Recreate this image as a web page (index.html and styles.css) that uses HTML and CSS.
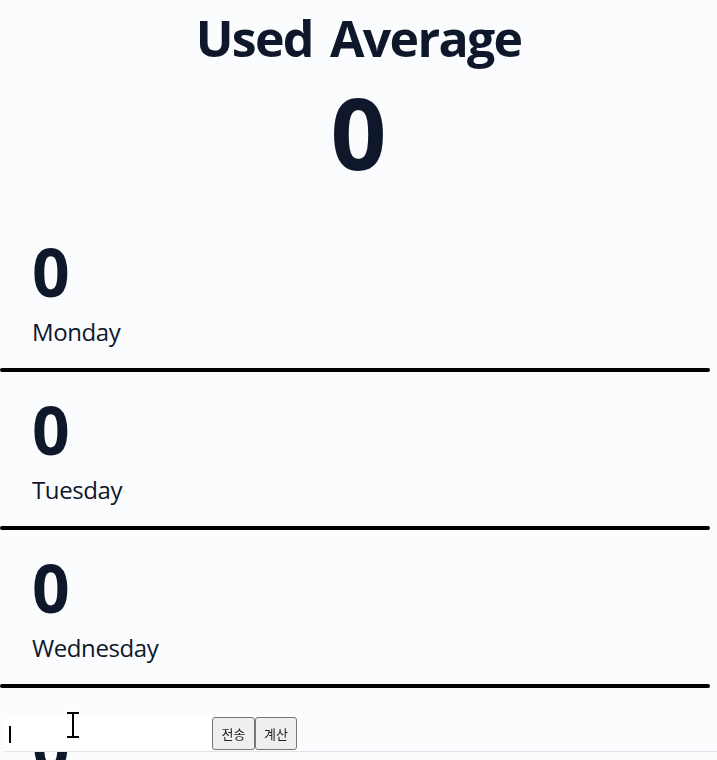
FILE: index.html
```html
<!DOCTYPE html>
<html lang="ko">
<head>
<meta charset="utf-8">
<title>Used Average</title>
<link rel="stylesheet" href="styles.css">
</head>
<body>
<main class="page">
  <header class="summary">
    <h1 class="summary-title">Used Average</h1>
    <div class="summary-value">0</div>
  </header>
  <ul class="days">
    <li class="day"><div class="day-body"><div class="day-count">0</div><div class="day-name">Monday</div></div></li>
    <li class="day"><div class="day-body"><div class="day-count">0</div><div class="day-name">Tuesday</div></div></li>
    <li class="day"><div class="day-body"><div class="day-count">0</div><div class="day-name">Wednesday</div></div></li>
    <li class="day"><div class="day-body"><div class="day-count">0</div><div class="day-name">Thursday</div></div></li>
    <li class="day"><div class="day-body"><div class="day-count">0</div><div class="day-name">Friday</div></div></li>
    <li class="day"><div class="day-body"><div class="day-count">0</div><div class="day-name">Saturday</div></div></li>
    <li class="day"><div class="day-body"><div class="day-count">0</div><div class="day-name">Sunday</div></div></li>
  </ul>
</main>
<form class="entry" onsubmit="return false">
  <div class="entry-field">
    <input class="entry-input" type="text" aria-label="사용량">
    <span class="entry-caret"></span>
  </div>
  <button class="entry-btn" type="button">전송</button>
  <button class="entry-btn" type="button">계산</button>
</form>
<svg class="pointer" width="16" height="28" viewBox="0 0 16 28" aria-hidden="true">
  <path d="M2 2h12M8 2v24M2 26h12" stroke="#fff" stroke-width="4" fill="none" stroke-linecap="square"/>
  <path d="M2 2h12M8 2v24M2 26h12" stroke="#000" stroke-width="2" fill="none"/>
</svg>
</body>
</html>
```
FILE: styles.css
```css
* { box-sizing: border-box; }

html, body {
  margin: 0;
  padding: 0;
  background: #fbfcfe;
}

body {
  font-family: "Open Sans", "Noto Sans", "Noto Sans CJK KR", sans-serif;
  color: #0f172a;
}

.page {
  padding-top: 8px;
  padding-bottom: 60px;
}

.summary {
  text-align: center;
}

.summary-title {
  margin: 0;
  font-size: 50px;
  line-height: 60px;
  font-weight: 700;
  letter-spacing: -1.7px;
  word-spacing: 6px;
}

.summary-value {
  margin-top: 14px;
  font-size: 98px;
  line-height: 100px;
  font-weight: 700;
}

.days {
  list-style: none;
  margin: 32px 0 0;
  padding: 0;
}

.day::after {
  content: "";
  display: block;
  height: 4px;
  margin-right: 7px;
  border-radius: 2px;
  background: #000;
}

.day-body {
  padding: 22px 32px 20px;
}

.day-count {
  font-size: 66px;
  line-height: 70px;
  font-weight: 700;
}

.day-name {
  margin-top: 10px;
  font-size: 24px;
  line-height: 32px;
  letter-spacing: -0.4px;
}

.entry {
  position: fixed;
  left: 5px;
  right: 0;
  bottom: 8px;
  display: flex;
  align-items: flex-start;
  height: 35px;
  border-bottom: 1px solid #e2e4e8;
}

.entry-field {
  position: relative;
  width: 207px;
  height: 34px;
  background: #fff;
}

.entry-input {
  width: 100%;
  height: 100%;
  border: 0;
  padding: 0 4px;
  background: transparent;
  outline: none;
  font: 13px "Noto Sans CJK KR", sans-serif;
}

.entry-caret {
  position: absolute;
  left: 4px;
  top: 9px;
  width: 2px;
  height: 17px;
  background: #000;
}

.entry-btn {
  width: 43px;
  height: 33px;
  padding: 0;
  margin: 0;
  font: 13px "Noto Sans CJK KR", sans-serif;
  color: #222;
  background: #efefef;
  border: 1px solid #767676;
  border-radius: 3px;
}

.entry-btn + .entry-btn {
  width: 42px;
}

.pointer {
  position: fixed;
  left: 65px;
  top: 711px;
}
```
